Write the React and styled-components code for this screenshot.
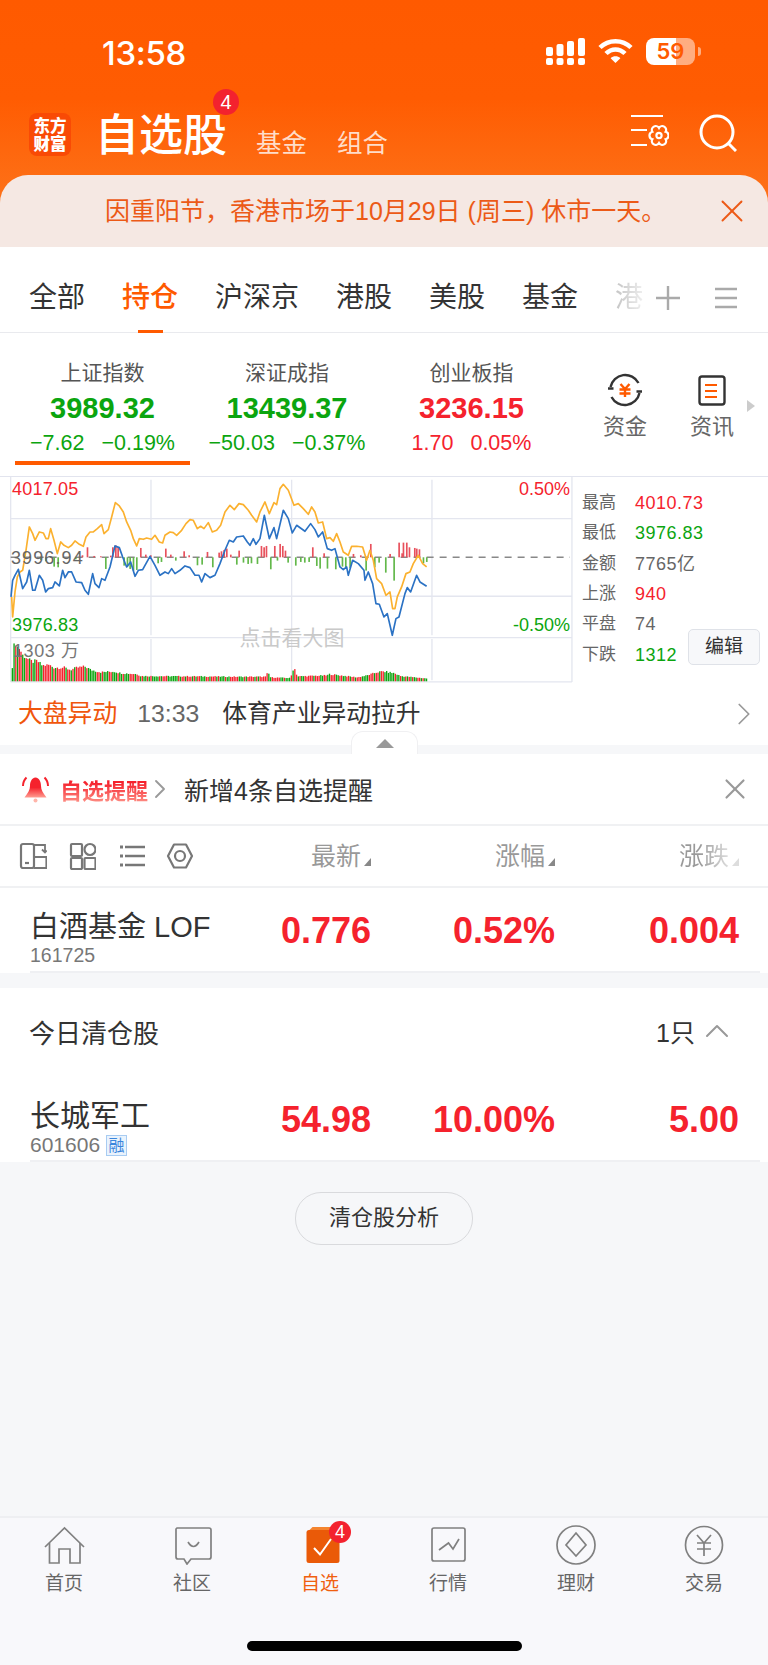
import React from 'react';
import styled, { createGlobalStyle } from 'styled-components';
import { X, ChevronRight, ChevronUp } from 'lucide-react';

const RED = '#f5222d';
const GREEN = '#0ba50f';
const ORANGE = '#ff5a00';

const GlobalStyle = createGlobalStyle`
  html, body { margin: 0; padding: 0; background: #f6f7f9; }
  * { box-sizing: border-box; }
  body { font-family: "Liberation Sans", "Noto Sans CJK SC", sans-serif; }
`;

const Page = styled.div`
  width: 768px;
  height: 1665px;
  display: flex;
  flex-direction: column;
  overflow: hidden;
  background: #f6f7f9;
`;

const Header = styled.header`
  height: 247px;
  display: flex;
  flex-direction: column;
  background: linear-gradient(180deg, #ff5a00 0%, #ff5c02 40%, #fd7118 80%);
  color: #fff;
`;

const StatusBar = styled.div`
  height: 102px;
  padding: 33px 73px 0 102px;
  display: flex;
  justify-content: space-between;
`;

const Clock = styled.div`
  font-family: Inter, sans-serif;
  font-weight: 500;
  font-size: 33px;
  line-height: 36px;
  letter-spacing: -0.3px;
  margin-top: 2px;
`;

const StatusIcons = styled.div`
  display: flex;
  align-items: flex-start;
  gap: 13px;
  padding-top: 5px;
`;

const Battery = styled.div`
  position: relative;
  width: 49px;
  height: 27px;
  border-radius: 8px;
  background: linear-gradient(90deg, #fff 0 62%, rgba(255, 255, 255, 0.5) 62%);
  color: ${ORANGE};
  font-family: Inter, sans-serif;
  font-weight: 600;
  font-size: 22px;
  line-height: 27px;
  text-align: center;
  &::after {
    content: '';
    position: absolute;
    right: -6px;
    top: 9px;
    width: 3px;
    height: 9px;
    border-radius: 0 3px 3px 0;
    background: rgba(255, 255, 255, 0.5);
  }
`;

const NavBar = styled.div`
  height: 73px;
  padding: 0 31px 0 29px;
  display: flex;
  align-items: flex-start;
`;

const Logo = styled.div`
  width: 42px;
  height: 43px;
  margin-top: 11px;
  border-radius: 8px;
  background: #f94a05;
  font-weight: 900;
  font-size: 16.5px;
  line-height: 18px;
  padding-top: 3px;
  text-align: center;
  font-family: "Noto Sans CJK SC", sans-serif;
`;

const TitleWrap = styled.div`
  position: relative;
  margin-left: 24px;
`;

const Title = styled.div`
  font-family: "Noto Sans CJK SC", sans-serif;
  font-weight: 500;
  font-size: 44px;
  line-height: 60px;
`;

const Badge = styled.span`
  position: absolute;
  display: flex;
  align-items: center;
  justify-content: center;
  color: #fff;
  background: #f3222e;
  border-radius: 50%;
  font-family: "Liberation Sans", sans-serif;
  width: ${p => p.$size}px;
  height: ${p => p.$size}px;
  font-size: ${p => p.$font}px;
  top: ${p => p.$top}px;
  left: ${p => p.$left}px;
`;

const SubNav = styled.span`
  font-size: 25.5px;
  line-height: 36px;
  margin-top: 23px;
  margin-left: ${p => p.$gap}px;
  color: rgba(255, 255, 255, 0.78);
`;

const NavIcons = styled.div`
  margin-left: auto;
  display: flex;
  gap: 30px;
  padding-top: 12px;
`;

const Banner = styled.div`
  height: 72px;
  border-radius: 28px 28px 0 0;
  background: #f5e8e3;
  padding: 0 17px 0 105px;
  display: flex;
  align-items: center;
  justify-content: space-between;
  font-size: 25px;
  line-height: 68px;
  color: #ec5a17;
`;

const Tabs = styled.nav`
  height: 86px;
  padding: 17px 31px 0 29px;
  background: #fff;
  border-bottom: 1px solid #e9eaee;
  display: flex;
  align-items: center;
  gap: 37px;
`;

const Tab = styled.span`
  position: relative;
  flex: none;
  white-space: nowrap;
  height: 69px;
  line-height: 67px;
  font-size: 28px;
  color: ${p => (p.$active ? ORANGE : '#333')};
  font-weight: ${p => (p.$active ? 500 : 400)};
  ${p => p.$active && `
    &::after {
      content: '';
      position: absolute;
      left: 16px;
      right: 15px;
      bottom: 0;
      height: 3px;
      background: ${ORANGE};
    }
  `}
`;

const FadedTab = styled(Tab)`
  background: linear-gradient(90deg, #c4c4c4, #eee);
  -webkit-background-clip: text;
  background-clip: text;
  color: transparent;
  margin-right: -24px;
`;

const TabTools = styled.div`
  margin-left: auto;
  display: flex;
  align-items: center;
  gap: 34px;
  svg { flex: none; }
`;

const Market = styled.section`
  background: #fff;
`;

const Indices = styled.div`
  height: 143px;
  padding-left: 15px;
  display: flex;
  align-items: flex-start;
  gap: 9.5px;
`;

const IndexCell = styled.div`
  width: 175px;
  flex: none;
  height: 132px;
  padding-top: 26px;
  text-align: center;
  border-bottom: 4px solid ${p => (p.$active ? ORANGE : 'transparent')};
  color: ${p => p.$color};
  white-space: nowrap;
`;

const IndexName = styled.div`
  font-size: 21px;
  line-height: 28px;
  color: #555;
`;

const IndexValue = styled.div`
  font-size: 29px;
  font-weight: 700;
  line-height: 40px;
  margin-top: 1px;
`;

const IndexDelta = styled.div`
  font-size: 21.5px;
  line-height: 30px;
  display: flex;
  justify-content: center;
  gap: 17px;
`;

const Shortcuts = styled.div`
  margin-left: 33.5px;
  padding-top: 39px;
  display: flex;
  gap: 41px;
  align-items: flex-start;
`;

const Shortcut = styled.div`
  width: 46px;
  display: flex;
  flex-direction: column;
  align-items: center;
  font-size: 22px;
  line-height: 30px;
  color: #666;
  svg { display: block; margin-bottom: 4px; }
`;

const MoreArrow = styled.span`
  width: 0;
  height: 0;
  margin: 28px 0 0 -29px;
  border-left: 8px solid #ccc;
  border-top: 6px solid transparent;
  border-bottom: 6px solid transparent;
`;

const ChartRow = styled.div`
  height: 206px;
  border-top: 1px solid #e2e4ee;
  padding-left: 10px;
  display: flex;
`;

const ChartSvg = styled.svg`
  flex: none;
  display: block;
`;

const StatsPanel = styled.div`
  padding-left: 9px;
  display: flex;
`;

const StatList = styled.div`
  width: 106px;
  padding-top: 11px;
`;

const Stat = styled.div`
  height: 30.3px;
  display: flex;
  align-items: center;
  white-space: nowrap;
  font-size: 17px;
  line-height: 20px;
  color: #666;
  b {
    font-weight: 400;
    font-size: 18px;
    line-height: 20px;
    letter-spacing: 0.5px;
    margin-left: 19px;
    color: ${p => p.$color || '#666'};
  }
`;

const EditButton = styled.div`
  width: 72px;
  height: 36px;
  margin-top: 152px;
  border: 1px solid #dfe2e8;
  border-radius: 5px;
  background: #f7f8fa;
  font-size: 19px;
  line-height: 34px;
  text-align: center;
  color: #333;
`;

const NewsRow = styled.div`
  height: 63px;
  padding: 0 5px 0 18px;
  display: flex;
  align-items: center;
  font-size: 24.8px;
  line-height: 60px;
  color: #333;
`;

const NewsTag = styled.span`
  color: #f0560c;
`;

const NewsTime = styled.span`
  color: #666;
  margin: 0 23px 0 20px;
`;

const RightAuto = styled.span`
  margin-left: auto;
  display: flex;
  color: ${p => p.$color || '#999'};
`;

const GapBar = styled.div`
  position: relative;
  height: 9px;
  background: #f6f7f9;
`;

const Handle = styled.div`
  position: absolute;
  left: 351px;
  bottom: 0;
  width: 67px;
  height: 23px;
  background: #fff;
  border: 1px solid #f0f0f2;
  border-bottom: none;
  border-radius: 12px 12px 0 0;
  &::after {
    content: '';
    position: absolute;
    left: 24px;
    top: 7px;
    border-left: 9px solid transparent;
    border-right: 9px solid transparent;
    border-bottom: 9px solid #999;
  }
`;

const AlertRow = styled.div`
  height: 72px;
  padding: 0 16px 0 22px;
  background: #fff;
  border-bottom: 2px solid #f0f1f3;
  display: flex;
  align-items: center;
  font-size: 25px;
  color: #333;
`;

const AlertTag = styled.span`
  margin-left: 11px;
  font-size: 22px;
  font-weight: 700;
  background: linear-gradient(180deg, #f5222d 30%, #ff9c90 100%);
  -webkit-background-clip: text;
  background-clip: text;
  color: transparent;
`;

const AlertChevron = styled.span`
  display: flex;
  margin: 0 8px 0 -4px;
  color: #999;
`;

const columns = `
  display: grid;
  grid-template-columns: 157px 184px 184px 184px;
`;

const ToolRow = styled.div`
  ${columns}
  height: 62px;
  padding: 0 29px 0 0;
  grid-template-columns: 187px 184px 184px 184px;
  align-items: center;
  background: #fff;
  border-bottom: 2px solid #f0f1f3;
`;

const ToolIcons = styled.div`
  display: flex;
  gap: 21px;
  padding-left: 19px;
  svg { flex: none; display: block; }
`;

const ColHead = styled.div`
  display: flex;
  justify-content: flex-end;
  align-items: flex-end;
  font-size: 25px;
  line-height: 36px;
  color: #999;
  &::after {
    content: '';
    width: 0;
    height: 0;
    margin: 0 0 8px 3px;
    border-left: 7px solid transparent;
    border-bottom: 8px solid ${p => (p.$fade ? '#ddd' : '#888')};
  }
`;

const FadeText = styled.span`
  background: linear-gradient(90deg, #999 40%, #ddd 100%);
  -webkit-background-clip: text;
  background-clip: text;
  color: transparent;
`;

const Section = styled.section`
  background: #fff;
  margin-bottom: ${p => p.$after || 0}px;
`;

const StockRow = styled.div`
  ${columns}
  height: ${p => p.$height}px;
  margin: 0 8px 0 30px;
  padding: 2px 21px 0 0;
  align-items: center;
  border-bottom: 2px solid #eff0f3;
`;

const NameCell = styled.div`
  align-self: start;
  padding-top: ${p => p.$top}px;
  white-space: nowrap;
`;

const StockName = styled.div`
  font-size: ${p => p.$size}px;
  line-height: 34px;
  color: #333;
  margin-bottom: ${p => p.$gap}px;
`;

const StockCode = styled.div`
  display: flex;
  align-items: center;
  gap: 6px;
  font-size: ${p => p.$size}px;
  line-height: 22px;
  color: #777;
`;

const MarginTag = styled.span`
  width: 21px;
  height: 21px;
  border: 1px solid #a8ccf2;
  background: #e9f3fd;
  color: #3b86dc;
  font-size: 16px;
  line-height: 19px;
  text-align: center;
`;

const Num = styled.div`
  text-align: right;
  font-size: 36px;
  font-weight: 700;
  color: ${RED};
`;

const SectionHead = styled.div`
  height: 90px;
  padding: 0 31px 4px 29px;
  display: flex;
  align-items: center;
  font-size: 26px;
  color: #333;
`;

const SectionCount = styled.span`
  margin-left: auto;
  display: flex;
  align-items: center;
  gap: 2px;
  font-size: 25px;
  color: #333;
  svg { color: #999; }
`;

const PillButton = styled.div`
  align-self: center;
  width: 178px;
  height: 53px;
  margin-top: 30px;
  border: 1.5px solid #d9dadd;
  border-radius: 26px;
  font-size: 22px;
  line-height: 50px;
  text-align: center;
  color: #333;
`;

const BottomBar = styled.footer`
  margin-top: auto;
  height: 149px;
  border-top: 2px solid #eeeff2;
  background: #f8f8fb;
  display: flex;
  flex-direction: column;
`;

const BarItems = styled.div`
  display: grid;
  grid-template-columns: repeat(6, 128px);
  padding-top: 7px;
`;

const BarItem = styled.div`
  position: relative;
  display: flex;
  flex-direction: column;
  align-items: center;
  font-size: 19px;
  line-height: 26px;
  color: ${p => (p.$active ? '#f0600f' : '#666')};
  svg { display: block; margin-bottom: 6px; }
`;

const HomeIndicator = styled.div`
  width: 275px;
  height: 10px;
  margin: 44px auto 0;
  border-radius: 5px;
  background: #000;
`;

const YELLOW_LINE = '35,380 38,440 45,365 52,320 60,305 68,300 78,240 88,170 98,190 105,210 118,185 130,188 138,205 145,205 152,175 162,210 172,250 182,215 192,225 205,232 215,225 225,212 238,222 250,228 258,200 270,185 280,185 292,175 305,163 312,190 325,178 335,140 346,97 358,107 370,125 380,155 392,180 400,205 410,227 418,205 430,207 440,203 455,207 465,195 478,215 488,218 495,195 510,185 520,187 530,195 545,180 558,160 570,148 580,150 592,175 602,168 612,175 625,157 637,185 650,180 662,165 675,125 690,105 703,118 717,100 730,103 745,120 755,135 770,155 780,125 795,95 808,130 822,97 830,103 840,55 850,42 865,60 882,105 895,100 910,115 925,132 935,110 945,125 955,158 968,155 980,205 990,202 1000,213 1010,190 1020,215 1030,245 1045,255 1055,228 1070,228 1088,230 1100,270 1110,240 1120,270 1130,325 1145,340 1158,375 1170,365 1178,415 1185,415 1192,380 1205,350 1218,310 1230,305 1240,280 1255,255 1268,280 1280,290';
const BLUE_LINE = '33,380 38,330 45,315 55,297 68,355 80,335 88,300 98,360 105,360 118,315 128,330 137,365 145,355 158,352 165,335 178,347 188,300 195,322 205,305 215,305 228,335 245,337 255,360 265,372 278,310 285,340 297,352 305,325 315,330 330,290 345,227 358,232 368,260 380,290 392,275 405,318 415,300 428,298 450,258 465,285 480,315 495,305 505,310 515,295 525,310 540,300 555,287 570,292 585,315 597,315 605,335 615,310 630,322 645,315 660,280 675,240 688,210 700,215 710,200 730,197 742,215 750,225 760,205 768,222 780,205 793,135 808,205 822,172 830,205 850,120 865,145 877,188 890,165 915,183 932,160 945,178 955,200 968,185 982,235 995,240 1005,235 1020,290 1030,298 1040,290 1045,315 1058,270 1075,280 1092,300 1095,330 1105,305 1118,340 1128,400 1138,402 1152,440 1162,430 1177,495 1188,445 1197,440 1215,370 1222,352 1232,365 1250,315 1260,335 1280,348';

// [x, h] in crop units, positive goes up (red), negative goes down (green)
const FLOW_BARS = [
  [120, -8], [135, -12], [160, -28], [172, -30], [225, -6], [245, 6], [260, 30], [280, 4], [300, 3], [315, -35], [330, 5], [336, 30], [345, 36], [352, 30],
  [370, -25], [380, -28], [388, -35], [398, -40], [408, -38], [420, 28], [435, 8], [450, 6], [472, -18], [482, -14], [495, 26], [510, 8], [525, -10], [550, 18], [565, 6], [590, -24], [604, -22], [620, 16], [636, -30],
  [655, 14], [662, 18], [670, 22], [678, 26], [690, 8], [708, -22], [715, 20], [728, -16], [742, -20], [752, -18], [770, -20], [782, 34], [790, 30], [797, 34], [810, -36], [822, 34], [830, -10], [838, 40], [846, 34], [854, 20], [862, -16], [885, -25],
  [900, -14], [912, -16], [925, -14], [936, 30], [948, -26], [958, -34], [970, 12], [980, -34], [1005, -36], [1025, -28], [1035, -30], [1048, -32], [1058, 10], [1080, 6], [1096, -40], [1110, 40], [1122, -30], [1135, -16], [1155, -46], [1168, 10], [1180, -70],
  [1195, 44], [1204, 12], [1208, 44], [1218, 44], [1226, 30], [1242, 28], [1248, 26], [1256, 24], [1268, -18], [1278, -14],
];

const VOLUME_KEYS = [
  [35, 45], [42, 128], [50, 105], [58, 100], [65, 80], [75, 75], [85, 65], [95, 60], [110, 62], [125, 48], [145, 50], [160, 42], [190, 42], [210, 35], [230, 42], [255, 45], [270, 35], [300, 28], [340, 30], [360, 25], [410, 22], [420, 16],
  [600, 15], [700, 14], [795, 14], [802, 28], [810, 12], [870, 10], [880, 45], [890, 15], [980, 18], [985, 22], [1070, 12], [1100, 18], [1130, 28], [1150, 30], [1180, 25], [1200, 16], [1285, 8],
];

const noise = i => {
  const v = Math.sin(i * 12.9898) * 43758.5453;
  return v - Math.floor(v);
};

const volumeAt = x => {
  for (let i = 1; i < VOLUME_KEYS.length; i++) {
    const [x0, h0] = VOLUME_KEYS[i - 1];
    const [x1, h1] = VOLUME_KEYS[i];
    if (x <= x1) return h0 + ((x - x0) / (x1 - x0)) * (h1 - h0);
  }
  return 8;
};

const VOLUME_BARS = Array.from({ length: 240 }, (_, i) => {
  const x = 35 + i * 5.2;
  return { x, h: volumeAt(x) * (0.88 + 0.2 * noise(i)), up: noise(i + 300) > 0.55 };
});

const Chart = () => (
  <ChartSvg width="563" height="206" viewBox="0 0 563 206">
    <g transform="translate(-10 -6.7) scale(0.3333)" fill="none">
      <g stroke="#e4e6ef" strokeWidth="4">
        <path d="M32 20V635M32 145H1716M32 378H1716M32 502H1716M32 635H1716M1716 20V635" />
        <path d="M453 28V495M875 28V495M1296 28V495M453 506V630M875 506V630M1296 506V630" />
      </g>
      <path d="M32 261H1710" stroke="#888" strokeWidth="4" strokeDasharray="21 18" />
      {FLOW_BARS.map(([x, h]) => (
        <rect key={x} x={x} y={h > 0 ? 261 - h : 261} width="5" height={Math.abs(h)} fill={h > 0 ? '#e8505c' : '#62b84a'} />
      ))}
      <polyline points={YELLOW_LINE} stroke="#fbb12f" strokeWidth="5" strokeLinejoin="round" />
      <polyline points={BLUE_LINE} stroke="#2b72c4" strokeWidth="5" strokeLinejoin="round" />
      {VOLUME_BARS.map(b => (
        <rect key={b.x} x={b.x} y={633 - b.h} width="4" height={b.h} fill={b.up ? '#f5222d' : '#0ba50f'} />
      ))}
    </g>
    <g fontFamily='"Liberation Sans", "Noto Sans CJK SC", sans-serif' fontSize="18">
      <text x="2" y="18" fill={RED} letterSpacing="0.2">4017.05</text>
      <text x="1" y="87" fill="#666" letterSpacing="1.1">3996.94</text>
      <text x="2" y="154" fill={GREEN} letterSpacing="0.2">3976.83</text>
      <text x="3" y="180" fill="#777" letterSpacing="0.6">1303 万</text>
      <text x="560" y="18" fill={RED} textAnchor="end">0.50%</text>
      <text x="560" y="154" fill={GREEN} textAnchor="end">-0.50%</text>
      <text x="282" y="168" fill="#c9c9c9" fontSize="21" textAnchor="middle">点击看大图</text>
    </g>
  </ChartSvg>
);

const SignalIcon = () => (
  <svg width="39" height="27" viewBox="0 0 39 27" fill="#fff">
    {[0, 10.5, 21, 32].map((x, i) => (
      <g key={x}>
        <rect x={x} y="20" width="7" height="7" rx="2" />
        <rect x={x} y={9 - i * 3} width="7" height={9 + i * 3} rx="2" />
      </g>
    ))}
  </svg>
);

const WifiIcon = () => (
  <svg width="35" height="26" viewBox="0 0 35 26" fill="none" stroke="#fff" strokeWidth="4.5">
    <path d="M2 9.5C10.5 1 24.5 1 33 9.5" />
    <path d="M8 15.5C13.5 10 21.5 10 27 15.5" />
    <path d="M17.5 25L12.6 20.2C15.4 17.6 19.6 17.6 22.4 20.2Z" fill="#fff" stroke="none" />
  </svg>
);

const ListGearIcon = () => (
  <svg width="38" height="34" viewBox="0 0 38 34" fill="none" stroke="#fff" strokeWidth="2.2">
    <path d="M0 2H32M0 16H16M0 31H16" />
    <path d="M28 14A3.8 3.8 0 0 1 34.6 17.8A3.8 3.8 0 0 1 34.6 25.2A3.8 3.8 0 0 1 28 29A3.8 3.8 0 0 1 21.4 25.2A3.8 3.8 0 0 1 21.4 17.8A3.8 3.8 0 0 1 28 14Z" />
    <circle cx="28" cy="21.5" r="2.6" />
  </svg>
);

const SearchIcon = () => (
  <svg width="38" height="38" viewBox="0 0 38 38" fill="none" stroke="#fff" strokeWidth="3">
    <circle cx="18" cy="18" r="16" />
    <path d="M29.5 29.5L37 37" />
  </svg>
);

const FundIcon = () => (
  <svg width="36" height="36" viewBox="0 0 36 36" fill="none">
    <g stroke="#333" strokeWidth="2.4">
      <path d="M3.5 15A15 15 0 0 1 31.5 11" />
      <path d="M32.5 21A15 15 0 0 1 4.5 25" />
      <path d="M1 16.5H6.5M29.5 19.5H35" />
    </g>
    <path d="M13.5 12L18 17L22.5 12M18 17V25M12.5 17.5H23.5M12.5 21.5H23.5" stroke={ORANGE} strokeWidth="2.4" />
  </svg>
);

const NewsIcon = () => (
  <svg width="36" height="36" viewBox="0 0 36 36" fill="none">
    <rect x="5.5" y="4.5" width="25" height="28" rx="2.5" stroke="#333" strokeWidth="2.4" />
    <path d="M11 13H23M11 19H23M11 25H23" stroke={ORANGE} strokeWidth="2.2" />
  </svg>
);

const BellIcon = () => (
  <svg width="27" height="27" viewBox="0 0 27 27">
    <defs>
      <linearGradient id="bell" x1="0" y1="0" x2="0" y2="1">
        <stop offset="0.5" stopColor="#f5222d" />
        <stop offset="1" stopColor="#ff9c90" />
      </linearGradient>
    </defs>
    <path d="M13.5 1.5C17.5 2 19 6 19 10C19 14 21 17 24.5 21.5H2.5C6 17 8 14 8 10C8 6 9.5 2 13.5 1.5Z" fill="url(#bell)" />
    <circle cx="13.5" cy="24.5" r="2" fill="#ffb5aa" />
    <path d="M4.5 1.5C2 4 1 7 1 10M22.5 1.5C25 4 26 7 26 10" fill="none" stroke="#f5222d" strokeWidth="2" />
  </svg>
);

const ToolIconSvg = ({ children }) => (
  <svg width="28" height="28" viewBox="0 0 28 28" fill="none" stroke="#777" strokeWidth="2.2">{children}</svg>
);

const ListTools = () => (
  <ToolIcons>
    <ToolIconSvg>
      <rect x="2" y="2" width="13" height="24" rx="2" />
      <path d="M15 15H27.5V26H15" />
      <path d="M6 21H10" />
      <path d="M15 3H26V10M23 7.5L26 10.5L27.8 8.5" strokeWidth="1.8" />
    </ToolIconSvg>
    <ToolIconSvg>
      <rect x="3" y="2" width="11" height="12" rx="1" />
      <circle cx="22" cy="7.5" r="5.5" />
      <rect x="3" y="16" width="11" height="11" rx="1" />
      <rect x="16.5" y="16" width="11" height="11" rx="1" />
    </ToolIconSvg>
    <ToolIconSvg>
      <path d="M8 5H28M8 14H28M8 23H28" strokeWidth="2.6" />
      <path d="M3 5H6M3 14H6M3 23H6" strokeWidth="3" />
    </ToolIconSvg>
    <ToolIconSvg>
      <path d="M2 14L8 2.5H20L26 14L20 25.5H8Z" strokeLinejoin="round" />
      <circle cx="14" cy="14" r="5" />
    </ToolIconSvg>
  </ToolIcons>
);

const BarIconSvg = ({ children }) => (
  <svg width="44" height="40" viewBox="0 0 44 40" fill="none" stroke="#808080" strokeWidth="1.7">{children}</svg>
);

const BookIcon = () => (
  <svg width="44" height="40" viewBox="0 0 44 40">
    <path d="M11 5.5L14.5 2H38V5.5Z" fill="#f4842f" />
    <rect x="8.5" y="5" width="33" height="33" rx="2.5" fill="#ea5a08" />
    <path d="M16 23L22 29.5L33 14" fill="none" stroke="#fff" strokeWidth="2" />
  </svg>
);

const TABS = ['全部', '持仓', '沪深京', '港股', '美股', '基金'];

const INDICES = [
  { name: '上证指数', value: '3989.32', change: '−7.62', pct: '−0.19%', color: GREEN, active: true },
  { name: '深证成指', value: '13439.37', change: '−50.03', pct: '−0.37%', color: GREEN },
  { name: '创业板指', value: '3236.15', change: '1.70', pct: '0.05%', color: RED },
];

const STATS = [
  ['最高', '4010.73', RED],
  ['最低', '3976.83', GREEN],
  ['金额', '7765亿'],
  ['上涨', '940', RED],
  ['平盘', '74'],
  ['下跌', '1312', GREEN],
];

const App = () => (
  <Page>
    <GlobalStyle />
    <Header>
      <StatusBar>
        <Clock>13:58</Clock>
        <StatusIcons>
          <SignalIcon />
          <WifiIcon />
          <Battery>59</Battery>
        </StatusIcons>
      </StatusBar>
      <NavBar>
        <Logo>东方<br />财富</Logo>
        <TitleWrap>
          <Title>自选股</Title>
          <Badge $size={26} $font={20} $top={-13} $left={118}>4</Badge>
        </TitleWrap>
        <SubNav $gap={29}>基金</SubNav>
        <SubNav $gap={30}>组合</SubNav>
        <NavIcons>
          <ListGearIcon />
          <SearchIcon />
        </NavIcons>
      </NavBar>
      <Banner>
        因重阳节，香港市场于10月29日 (周三) 休市一天。
        <X size={38} strokeWidth={1.2} />
      </Banner>
    </Header>

    <Tabs>
      {TABS.map(t => <Tab key={t} $active={t === '持仓'}>{t}</Tab>)}
      <FadedTab>港</FadedTab>
      <TabTools>
        <svg width="24" height="24" viewBox="0 0 24 24" fill="none" stroke="#aaa" strokeWidth="2.4">
          <path d="M12 0V24M0 12H24" />
        </svg>
        <svg width="24" height="24" viewBox="0 0 24 24" fill="none" stroke="#aaa" strokeWidth="2.6">
          <path d="M1 3H23M1 12H23M1 21H23" />
        </svg>
      </TabTools>
    </Tabs>

    <Market>
      <Indices>
        {INDICES.map(i => (
          <IndexCell key={i.name} $active={i.active} $color={i.color}>
            <IndexName>{i.name}</IndexName>
            <IndexValue>{i.value}</IndexValue>
            <IndexDelta><span>{i.change}</span><span>{i.pct}</span></IndexDelta>
          </IndexCell>
        ))}
        <Shortcuts>
          <Shortcut><FundIcon />资金</Shortcut>
          <Shortcut><NewsIcon />资讯</Shortcut>
          <MoreArrow />
        </Shortcuts>
      </Indices>
      <ChartRow>
        <Chart />
        <StatsPanel>
          <StatList>
            {STATS.map(([label, value, color]) => (
              <Stat key={label} $color={color}>{label}<b>{value}</b></Stat>
            ))}
          </StatList>
          <EditButton>编辑</EditButton>
        </StatsPanel>
      </ChartRow>
      <NewsRow>
        <NewsTag>大盘异动</NewsTag>
        <NewsTime>13:33</NewsTime>
        体育产业异动拉升
        <RightAuto><ChevronRight size={38} strokeWidth={1.1} /></RightAuto>
      </NewsRow>
    </Market>
    <GapBar><Handle /></GapBar>

    <AlertRow>
      <BellIcon />
      <AlertTag>自选提醒</AlertTag>
      <AlertChevron><ChevronRight size={32} strokeWidth={1.4} /></AlertChevron>
      新增4条自选提醒
      <RightAuto><X size={34} strokeWidth={1.5} /></RightAuto>
    </AlertRow>

    <Section $after={15}>
      <ToolRow>
        <ListTools />
        <ColHead>最新</ColHead>
        <ColHead>涨幅</ColHead>
        <ColHead $fade><FadeText>涨跌</FadeText></ColHead>
      </ToolRow>
      <StockRow $height={85}>
        <NameCell $top={20}>
          <StockName $size={29} $gap={0}>白酒基金 LOF</StockName>
          <StockCode $size={19.5}>161725</StockCode>
        </NameCell>
        <Num>0.776</Num>
        <Num>0.52%</Num>
        <Num>0.004</Num>
      </StockRow>
    </Section>

    <Section>
      <SectionHead>
        今日清仓股
        <SectionCount>1只<ChevronUp size={40} strokeWidth={1.2} /></SectionCount>
      </SectionHead>
      <StockRow $height={84}>
        <NameCell $top={19}>
          <StockName $size={30} $gap={1}>长城军工</StockName>
          <StockCode $size={21}>601606<MarginTag>融</MarginTag></StockCode>
        </NameCell>
        <Num>54.98</Num>
        <Num>10.00%</Num>
        <Num>5.00</Num>
      </StockRow>
    </Section>

    <PillButton>清仓股分析</PillButton>

    <BottomBar>
      <BarItems>
        <BarItem>
          <BarIconSvg>
            <path d="M3 22L22.5 3L42 22" />
            <path d="M7.5 18V38H17V24H28V38H38V18" />
          </BarIconSvg>
          首页
        </BarItem>
        <BarItem>
          <BarIconSvg>
            <path d="M7 3H39A2 2 0 0 1 41 5V32A2 2 0 0 1 39 34H21L17 39L14 34H8A2 2 0 0 1 6 32V4Z" />
            <path d="M18 17Q23.5 26 29 17" />
          </BarIconSvg>
          社区
        </BarItem>
        <BarItem $active>
          <BookIcon />
          <Badge $size={22} $font={18} $top={-4} $left={73}>4</Badge>
          自选
        </BarItem>
        <BarItem>
          <BarIconSvg>
            <rect x="6" y="3" width="33" height="33" rx="2" />
            <path d="M13 25L22.5 18L27 24L33 14" />
          </BarIconSvg>
          行情
        </BarItem>
        <BarItem>
          <BarIconSvg>
            <circle cx="22" cy="20" r="19" />
            <path d="M22 8L32 20L22 31L12 20Z" />
          </BarIconSvg>
          理财
        </BarItem>
        <BarItem>
          <BarIconSvg>
            <circle cx="22" cy="20" r="18.5" />
            <path d="M15 10L22 18L29 10M22 18V31M15 18H29M15 24H29" />
          </BarIconSvg>
          交易
        </BarItem>
      </BarItems>
      <HomeIndicator />
    </BottomBar>
  </Page>
);

export default App;
